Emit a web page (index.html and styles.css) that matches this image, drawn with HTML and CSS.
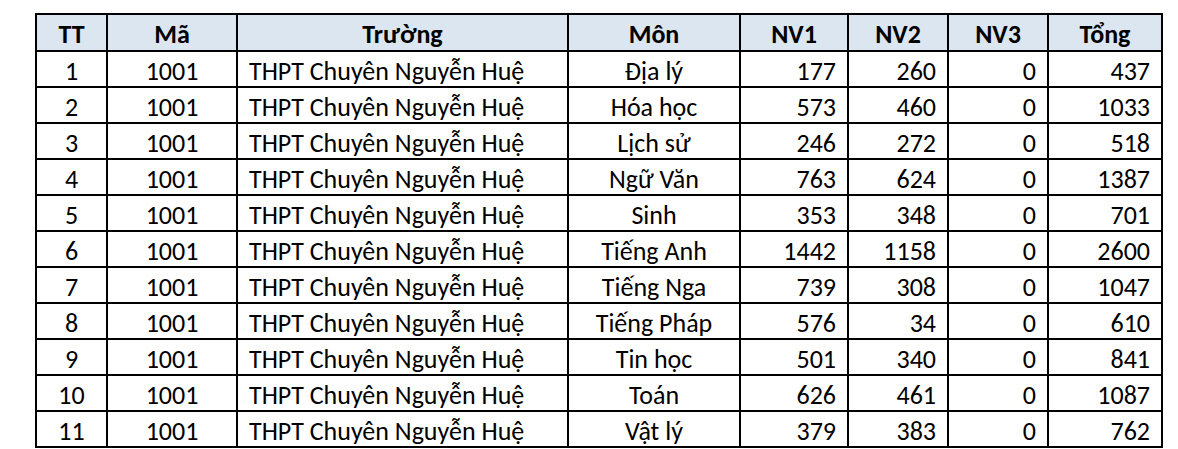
FILE: index.html
```html
<!DOCTYPE html>
<html lang="vi">
<head>
<meta charset="utf-8">
<title>Bảng</title>
<link rel="stylesheet" href="styles.css">
</head>
<body>
<table class="data">
  <colgroup>
    <col class="c-tt"><col class="c-ma"><col class="c-truong"><col class="c-mon">
    <col class="c-nv"><col class="c-nv2"><col class="c-nv2"><col class="c-tong">
  </colgroup>
  <thead>
    <tr><th>TT</th><th>Mã</th><th>Trường</th><th>Môn</th><th>NV1</th><th>NV2</th><th>NV3</th><th>Tổng</th></tr>
  </thead>
  <tbody>
    <tr><td class="ctr">1</td><td class="ctr">1001</td><td>THPT Chuyên Nguyễn Huệ</td><td class="ctr">Địa lý</td><td class="num">177</td><td class="num">260</td><td class="num">0</td><td class="num">437</td></tr>
    <tr><td class="ctr">2</td><td class="ctr">1001</td><td>THPT Chuyên Nguyễn Huệ</td><td class="ctr">Hóa học</td><td class="num">573</td><td class="num">460</td><td class="num">0</td><td class="num">1033</td></tr>
    <tr><td class="ctr">3</td><td class="ctr">1001</td><td>THPT Chuyên Nguyễn Huệ</td><td class="ctr">Lịch sử</td><td class="num">246</td><td class="num">272</td><td class="num">0</td><td class="num">518</td></tr>
    <tr><td class="ctr">4</td><td class="ctr">1001</td><td>THPT Chuyên Nguyễn Huệ</td><td class="ctr">Ngữ Văn</td><td class="num">763</td><td class="num">624</td><td class="num">0</td><td class="num">1387</td></tr>
    <tr><td class="ctr">5</td><td class="ctr">1001</td><td>THPT Chuyên Nguyễn Huệ</td><td class="ctr">Sinh</td><td class="num">353</td><td class="num">348</td><td class="num">0</td><td class="num">701</td></tr>
    <tr><td class="ctr">6</td><td class="ctr">1001</td><td>THPT Chuyên Nguyễn Huệ</td><td class="ctr">Tiếng Anh</td><td class="num">1442</td><td class="num">1158</td><td class="num">0</td><td class="num">2600</td></tr>
    <tr><td class="ctr">7</td><td class="ctr">1001</td><td>THPT Chuyên Nguyễn Huệ</td><td class="ctr">Tiếng Nga</td><td class="num">739</td><td class="num">308</td><td class="num">0</td><td class="num">1047</td></tr>
    <tr><td class="ctr">8</td><td class="ctr">1001</td><td>THPT Chuyên Nguyễn Huệ</td><td class="ctr">Tiếng Pháp</td><td class="num">576</td><td class="num">34</td><td class="num">0</td><td class="num">610</td></tr>
    <tr><td class="ctr">9</td><td class="ctr">1001</td><td>THPT Chuyên Nguyễn Huệ</td><td class="ctr">Tin học</td><td class="num">501</td><td class="num">340</td><td class="num">0</td><td class="num">841</td></tr>
    <tr><td class="ctr">10</td><td class="ctr">1001</td><td>THPT Chuyên Nguyễn Huệ</td><td class="ctr">Toán</td><td class="num">626</td><td class="num">461</td><td class="num">0</td><td class="num">1087</td></tr>
    <tr><td class="ctr">11</td><td class="ctr">1001</td><td>THPT Chuyên Nguyễn Huệ</td><td class="ctr">Vật lý</td><td class="num">379</td><td class="num">383</td><td class="num">0</td><td class="num">762</td></tr>
  </tbody>
</table>
</body>
</html>
```
FILE: styles.css
```css
html, body {
  margin: 0;
  padding: 0;
  background: #ffffff;
}
body {
  padding: 13px 0 0 35px;
  font-family: Carlito, Calibri, "Open Sans", sans-serif;
  color: #000000;
}
.data {
  border-collapse: collapse;
  table-layout: fixed;
  width: 1128px;
  font-size: 26px;
  line-height: 1;
}
.c-tt { width: 71px; }
.c-ma { width: 130px; }
.c-truong { width: 331px; }
.c-mon { width: 172px; }
.c-nv { width: 108px; }
.c-nv2 { width: 100px; }
.c-tong { width: 114px; }
.data th,
.data td {
  border: 2px solid #000000;
  padding: 3px 11px 0 11px;
  white-space: nowrap;
  overflow: hidden;
}
.data th {
  height: 32px;
  background: #dce6f1;
  font-weight: bold;
  text-align: center;
}
.data td {
  height: 31px;
  font-weight: normal;
  text-align: left;
}
.data td.ctr { text-align: center; }
.data td.num { text-align: right; }
```
